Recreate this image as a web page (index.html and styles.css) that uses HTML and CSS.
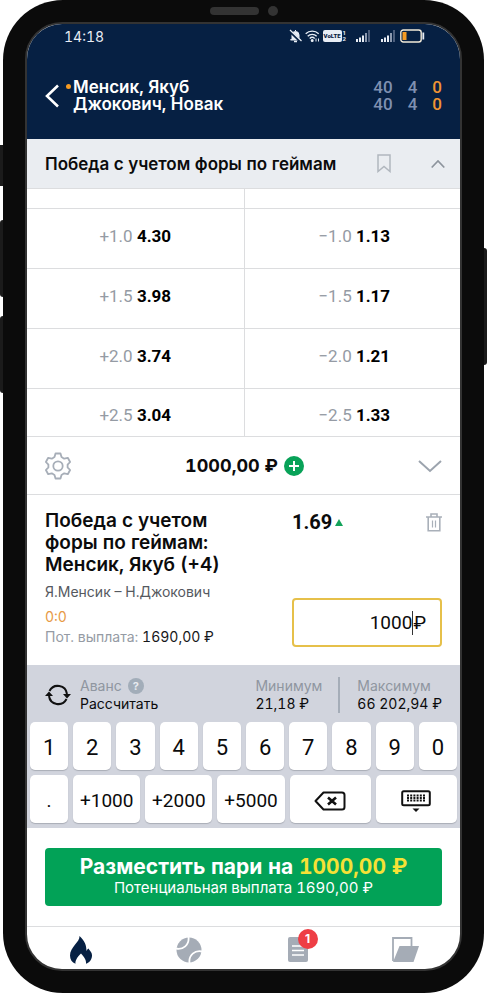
FILE: index.html
```html
<!DOCTYPE html>
<html lang="ru">
<head>
<meta charset="utf-8">
<meta name="viewport" content="width=device-width, initial-scale=1">
<title>Менсик, Якуб – Джокович, Новак</title>
<link rel="stylesheet" href="styles.css">
</head>
<body>
<div class="phone">
  <span class="side-key side-key-mute"></span>
  <span class="side-key side-key-up"></span>
  <span class="side-key side-key-down"></span>
  <span class="side-key side-key-power"></span>
  <div class="bezel-top"><span class="speaker"></span><span class="camera"></span></div>

  <div class="screen">
    <header class="top">
      <div class="status">
        <time class="clock">14:18</time>
        <div class="status-icons">
          <svg width="13" height="14" viewBox="0 0 13 14"><path d="M6.500 1v1M3 9.500V6a3.500 3.500 0 0 1 7 0v3.500l1.500 1.500h-10z" fill="#e8edf5" stroke="#e8edf5"/><path d="M5 12.500h3" stroke="#e8edf5" stroke-width="1.500"/><path d="M0 1.500 12 13" stroke="#062043" stroke-width="2.500"/><path d="M1 1 12.500 12" stroke="#e8edf5" stroke-width="1.200"/></svg>
          <svg class="wifi" width="15" height="14" viewBox="0 0 15 14" fill="none" stroke="#e8edf5" stroke-width="1.400"><path d="M.700 4.700a9.500 9.500 0 0 1 13 0M2.700 7.200a6.500 6.500 0 0 1 9 0M4.700 9.500a3.600 3.600 0 0 1 5 0"/><circle cx="7.200" cy="11.600" r=".8" fill="#e8edf5"/><path d="M11 9.500v3M13.500 9.500v3" stroke-width="1"/></svg>
          <span class="volte">VoLTE</span>
          <span class="sim"><span>1</span><span>2</span></span>
          <svg class="signal" width="14" height="12" viewBox="0 0 14 12"><path d="M0 9h2v3H0zM3 7.500h2V12H3zM6 5.500h2V12H6z" fill="#e8edf5"/><path d="M9 3h2v9H9z" fill="#8d9ab0"/><path d="M12 0h2v12h-2z" fill="#4c5e7c"/></svg>
          <svg class="signal" width="14" height="12" viewBox="0 0 14 12"><path d="M0 9h2v3H0zM3 7.500h2V12H3zM6 5.500h2V12H6z" fill="#e8edf5"/><path d="M9 3h2v9H9z" fill="#8d9ab0"/><path d="M12 0h2v12h-2z" fill="#4c5e7c"/></svg>
          <svg class="battery" width="25" height="14" viewBox="0 0 25 14"><rect x=".8" y="1" width="20.400" height="12" rx="2.500" fill="none" stroke="#f2ead9" stroke-width="1.400"/><rect x="2.500" y="3" width="4" height="8" fill="#f49a22"/><path d="M23.300 3.500v7" stroke="#e8edf5" stroke-width="1.800"/></svg>
        </div>
      </div>
      <div class="match">
        <button class="back" type="button" aria-label="Назад"><svg width="14" height="24" viewBox="0 0 14 24"><path d="M13 1.500 2 12l11 10.500" fill="none" stroke="#fff" stroke-width="2.600"/></svg></button>
        <span class="serve"></span>
        <h1 class="players">Менсик, Якуб<br>Джокович, Новак</h1>
        <div class="score">
          <span>40</span><span>4</span><span class="live">0</span>
          <span>40</span><span>4</span><span class="live">0</span>
        </div>
      </div>
    </header>

    <div class="market">
      <h2 class="market-name">Победа с учетом форы по геймам</h2>
      <button class="plain" type="button" aria-label="В закладки"><svg width="14" height="19" viewBox="0 0 14 19"><path d="M1 1h12v16.500L7 12.500l-6 5z" fill="none" stroke="#b1b7be" stroke-width="1.500"/></svg></button>
      <button class="plain collapse" type="button" aria-label="Свернуть"><svg width="14" height="10" viewBox="0 0 14 10"><path d="M.7 8.500 7 2l6.300 6.500" fill="none" stroke="#8d949d" stroke-width="1.700"/></svg></button>
    </div>

    <table class="odds">
      <tbody>
        <tr class="odds-cut"><td></td><td></td></tr>
        <tr><td>+1.0 <b>4.30</b></td><td>−1.0 <b>1.13</b></td></tr>
        <tr><td>+1.5 <b>3.98</b></td><td>−1.5 <b>1.17</b></td></tr>
        <tr><td>+2.0 <b>3.74</b></td><td>−2.0 <b>1.21</b></td></tr>
        <tr class="odds-last"><td>+2.5 <b>3.04</b></td><td>−2.5 <b>1.33</b></td></tr>
      </tbody>
    </table>

    <section class="balance">
      <button class="plain" type="button" aria-label="Настройки"><svg width="26" height="28" viewBox="0 0 26 28" fill="none" stroke="#a7aeb8" stroke-width="1.800" stroke-linejoin="round"><path d="M10.500 1.500h5l1 3.600 2.700 1.600 3.600-.9 2.300 4.200-2.500 2.600v2.800l2.500 2.600-2.300 4.200-3.600-.9-2.700 1.600-1 3.600h-5l-1-3.600-2.700-1.600-3.600.9L.9 18l2.500-2.600v-2.800L.9 10l2.300-4.200 3.600.9 2.700-1.600z"/><circle cx="13" cy="14" r="4.700"/></svg></button>
      <div class="sum"><strong>1000,00 ₽</strong>
        <button class="plain" type="button" aria-label="Пополнить"><svg width="20" height="20" viewBox="0 0 20 20"><circle cx="10" cy="10" r="10" fill="#08a258"/><path d="M10 5v10M5 10h10" stroke="#fff" stroke-width="2"/></svg></button>
      </div>
      <button class="plain" type="button" aria-label="Скрыть купон"><svg width="24" height="14" viewBox="0 0 24 14"><path d="M1 2l11 10L23 2" fill="none" stroke="#9ca4ae" stroke-width="2"/></svg></button>
    </section>

    <section class="bet">
      <div class="bet-info">
        <h3 class="bet-title">Победа с учетом<br>форы по геймам:<br>Менсик, Якуб (+4)</h3>
        <p class="bet-match">Я.Менсик – Н.Джокович</p>
        <p class="bet-score">0:0</p>
        <p class="bet-payout">Пот. выплата: <span>1690,00 ₽</span></p>
      </div>
      <div class="bet-side">
        <div class="bet-odd">
          <strong>1.69</strong>
          <svg class="up" width="8" height="7" viewBox="0 0 8 7"><path d="M4 0l4 7H0z" fill="#12a35a"/></svg>
          <button class="plain" type="button" aria-label="Удалить"><svg width="16" height="19" viewBox="0 0 16 19" fill="none" stroke="#a9b0b9" stroke-width="1.600"><path d="M0 4h16M5 3.500V1h6v2.500M2.200 4.500v13.200h11.600V4.500"/><path d="M6.500 7.500v7M9.500 7.500v7" stroke-width="1.200"/></svg></button>
        </div>
        <label class="stake"><input type="text" inputmode="numeric" value="1000" aria-label="Сумма пари"><span class="caret"></span><span>₽</span></label>
      </div>
    </section>

    <section class="keyboard">
      <div class="limits">
        <svg class="refresh" width="26" height="22" viewBox="0 0 26 22"><path d="M4.500 7A9.300 9.300 0 0 1 22 10M21.500 15A9.300 9.300 0 0 1 4 12" fill="none" stroke="#111" stroke-width="2"/><path d="M18 10h8l-4 4.500zM0 12h8L4 7.500z" fill="#111"/></svg>
        <div class="limit advance"><span class="hint">Аванс <i class="help">?</i></span><span>Рассчитать</span></div>
        <div class="limit"><span class="hint">Минимум</span><span>21,18 ₽</span></div>
        <div class="limit limit-max"><span class="hint">Максимум</span><span>66 202,94 ₽</span></div>
      </div>
      <div class="keys">
        <button type="button">1</button><button type="button">2</button><button type="button">3</button><button type="button">4</button><button type="button">5</button><button type="button">6</button><button type="button">7</button><button type="button">8</button><button type="button">9</button><button type="button">0</button>
      </div>
      <div class="keys keys-wide">
        <button type="button">.</button><button type="button">+1000</button><button type="button">+2000</button><button type="button">+5000</button>
        <button type="button" aria-label="Стереть"><svg width="32" height="20" viewBox="0 0 32 20" fill="none" stroke="#111" stroke-width="2" stroke-linejoin="round"><path d="M9.500 1.500H28a2.500 2.500 0 0 1 2.500 2.500v12a2.500 2.500 0 0 1-2.500 2.500H9.500L1.500 10z"/><path d="m14 6.500 8 7m0-7-8 7" stroke-width="2.600"/></svg></button>
        <button type="button" aria-label="Скрыть клавиатуру"><svg width="30" height="22" viewBox="0 0 30 22"><rect x="1.200" y="1.200" width="27.600" height="14" rx="1.500" fill="none" stroke="#111" stroke-width="2"/><path d="M6 5.500h18M6 8h18M6 10.500h18" stroke="#111" stroke-width="1.800" stroke-dasharray="2 1.200"/><path d="M11.500 18.500h7l-3.500 3.500z" fill="#111"/></svg></button>
      </div>
    </section>

    <div class="place">
      <button class="place-btn" type="button">
        <span class="place-main">Разместить пари на <em>1000,00 ₽</em></span>
        <span class="place-sub">Потенциальная выплата 1690,00 ₽</span>
      </button>
    </div>

    <nav class="tabs">
      <a href="#top" aria-label="Популярное"><svg width="22" height="28" viewBox="0 0 22 28"><path d="M9.500 0c.5 6-9.500 11-9.500 19.500 0 4 2 7 5.500 8.300-.5-3.500 2-6.800 5.500-10.300 3 3.500 5.500 6.500 5 10.300 3.500-1.300 6-4.300 6-8.300 0-3.500-2-4.500-3.500-7-1 .8-1.800 1.500-2 2.700C16.500 9 14.500 4.500 9.500 0z" fill="#062043"/></svg></a>
      <a href="#sport" aria-label="Спорт"><svg width="26" height="26" viewBox="0 0 26 26"><circle cx="13" cy="13" r="12.500" fill="#a5acb6"/><path d="M0 11.500C7 13 13.500 8 12.500 0M13.500 26C12.500 18 19 13 26 14.500" fill="none" stroke="#fff" stroke-width="1.800"/></svg></a>
      <a class="coupon" href="#coupon" aria-label="Купон"><svg width="20" height="25" viewBox="0 0 20 25"><rect width="20" height="25" rx="2" fill="#a5acb6"/><path d="M4 9h12M4 13.500h12M4 18h12" stroke="#fff" stroke-width="1.400"/></svg><span class="badge">1</span></a>
      <a href="#history" aria-label="История"><svg width="27" height="25" viewBox="0 0 27 25"><path d="M1 24V1h18.500v8" fill="none" stroke="#a5acb6" stroke-width="1.800"/><path d="M7.500 9H27l-5.500 16H1z" fill="#a5acb6"/></svg></a>
    </nav>
  </div>
</div>
</body>
</html>
```
FILE: styles.css
```css
:root {
  --navy: #062043;
  --line: #dcdddf;
  --muted: #959ba4;
  --green: #02a257;
  --text: Inter, "Noto Sans", sans-serif;
  --digits: Roboto, "Noto Sans", sans-serif;
}

* { box-sizing: border-box; }

body {
  margin: 0;
  padding: 0 3px;
  background: #fff;
  color: #0b0b0c;
  font-family: var(--text);
  font-size: 14px;
  font-variant-numeric: tabular-nums;
}

h1, h2, h3, p { margin: 0; }

button, input { font: inherit; color: inherit; font-variant-numeric: inherit; }

svg { display: block; flex: none; }

.plain, .back {
  padding: 0;
  border: 0;
  background: none;
}

.phone {
  position: relative;
  display: flex;
  flex-direction: column;
  min-height: 100vh;
  padding: 0 22px 22px;
  border-radius: 60px;
  background: #0b0b0b;
}

.side-key {
  position: absolute;
  left: -3px;
  width: 3px;
  background: #1b1b1b;
}

.side-key-mute { top: 145px; height: 41px; }
.side-key-up { top: 220px; height: 77px; border-radius: 3px 0 0 3px; }
.side-key-down { top: 316px; height: 77px; border-radius: 3px 0 0 3px; }
.side-key-power { top: 248px; left: auto; right: -3px; height: 117px; border-radius: 0 3px 3px 0; }

.bezel-top {
  display: flex;
  justify-content: center;
  align-items: center;
  gap: 9px;
  height: 22px;
}

.speaker { width: 49px; height: 8px; border-radius: 4px; background: #333; }
.camera { width: 10px; height: 10px; border-radius: 50%; background: #333; }

.screen {
  flex: 1;
  display: flex;
  flex-direction: column;
  overflow: hidden;
  border: 2px solid #333;
  border-radius: 37px;
  background: #fff;
}

.top { background: var(--navy); color: #fff; }

.status {
  display: flex;
  justify-content: space-between;
  align-items: center;
  height: 24px;
  padding: 0 35px 0 37px;
}

.clock { color: #e8edf5; font-size: 14px; }

.status-icons { display: flex; align-items: center; color: #e8edf5; }

.wifi { margin-left: 3px; }

.volte {
  margin-left: 3px;
  padding: 0 1px;
  border-radius: 2px;
  background: #e8edf5;
  color: var(--navy);
  font: 900 6px/12px var(--digits);
}

.sim {
  display: grid;
  margin: 0 10px 0 1px;
  font: 700 6px/6px var(--digits);
}

.signal { margin-right: 11px; }
.signal + .battery { margin-left: -6px; }

.match {
  display: flex;
  align-items: center;
  height: 91px;
  padding: 4px 18px 0;
}

.serve {
  align-self: flex-start;
  width: 5px;
  height: 5px;
  margin: 32px 2px 0 7px;
  border-radius: 50%;
  background: #f49a22;
}

.players { flex: 1; font-size: 17px; font-weight: 600; line-height: 17px; }

.score {
  display: grid;
  grid-template-columns: auto auto auto;
  column-gap: 15px;
  color: #7f90b1;
  font: 500 17px/17px var(--digits);
}

.score .live { color: #ef9433; }

.market {
  display: flex;
  align-items: center;
  height: 50px;
  padding: 0 15px 0 18px;
  border-bottom: 1px solid var(--line);
  background: #eaedf1;
}

.market-name { flex: 1; font-size: 17px; font-weight: 600; white-space: nowrap; }
.collapse { margin-left: 40px; }

.odds {
  width: 100%;
  table-layout: fixed;
  border-spacing: 0;
  color: var(--muted);
  font: 400 17px/20px var(--digits);
  text-align: center;
}

.odds td {
  height: 60px;
  padding: 0 0 6px;
  border-bottom: 1px solid var(--line);
}

.odds td + td { padding-left: 4px; border-left: 1px solid var(--line); }
.odds b { color: #000; }
.odds .odds-cut td { height: 20px; padding: 0; }
.odds .odds-last td { height: 48px; padding-top: 4px; padding-bottom: 0; }

.balance {
  display: flex;
  justify-content: space-between;
  align-items: center;
  height: 58px;
  padding: 0 18px;
  border-bottom: 1px solid var(--line);
}

.sum { display: flex; align-items: center; gap: 6px; font-size: 18px; }

.bet {
  display: flex;
  justify-content: space-between;
  padding: 15px 18px 18px;
}

.bet-title { font-size: 19px; font-weight: 600; line-height: 22px; white-space: nowrap; }
.bet-match { margin-top: 5px; color: #55595f; line-height: 22px; }
.bet-score { margin-top: 4px; color: #e79a45; line-height: 20px; }
.bet-payout { color: var(--muted); line-height: 20px; }
.bet-payout span { color: #17181a; }

.bet-side {
  display: flex;
  flex-direction: column;
  justify-content: space-between;
  width: 150px;
}

.bet-odd { display: flex; align-items: center; height: 24px; }
.bet-odd strong { font: 700 20px/24px var(--digits); }
.up { margin: 0 auto 0 3px; }

.stake {
  display: flex;
  align-items: center;
  height: 49px;
  padding: 0 14px;
  border: 2px solid #e6c04a;
  border-radius: 4px;
  font: 400 19px/24px var(--digits);
}

.stake input {
  flex: 1;
  min-width: 0;
  padding: 0;
  border: 0;
  outline: 0;
  background: none;
  text-align: right;
}

.caret { width: 1px; height: 24px; background: #333; }

.keyboard { padding: 10px 3px 5px; background: #d1d4dd; }

.limits {
  display: flex;
  align-items: center;
  height: 40px;
  margin-bottom: 7px;
  padding: 0 0 0 15px;
}

.limit {
  display: grid;
  line-height: 18px;
  white-space: nowrap;
}

.advance { flex: 1; margin-left: 9px; }
.limit-max { margin-left: 16px; padding: 0 15px 0 17px; border-left: 2px solid #a5adb8; }
.hint { display: flex; align-items: center; gap: 6px; color: #8f96a0; }

.help {
  width: 16px;
  border-radius: 50%;
  background: #a2adb9;
  color: #e7eaef;
  font: 700 11px/16px var(--text);
  text-align: center;
}

.keys {
  display: grid;
  grid-template-columns: repeat(10, 1fr);
  gap: 5px;
}

.keys button {
  display: flex;
  justify-content: center;
  align-items: center;
  height: 48px;
  padding: 4px 0 0;
  border: 0;
  border-radius: 5px;
  background: #fff;
  box-shadow: 0 1px 1px #a9adb6;
  font: 400 22px/28px var(--digits);
}

.keys-wide {
  grid-template-columns: 38fr 67fr 67fr 67fr 81fr 81fr;
  margin-top: 5px;
}

.keys-wide button { font-size: 19px; }

.place { padding: 20px 18px; }

.place-btn {
  display: grid;
  align-content: center;
  width: 100%;
  height: 58px;
  padding: 0;
  border: 0;
  border-radius: 4px;
  background: var(--green);
  color: #fff;
  white-space: nowrap;
}

.place-main { font-size: 21px; font-weight: 700; line-height: 22px; }
.place-main em { color: #f5e136; font-style: normal; }
.place-sub { font-size: 15px; line-height: 20px; }

.tabs {
  flex: 1;
  display: grid;
  grid-template-columns: repeat(4, 1fr);
  align-items: center;
  justify-items: center;
  min-height: 43px;
  padding-top: 3px;
  border-top: 1px solid var(--line);
}

.coupon { position: relative; }

.badge {
  position: absolute;
  top: -8px;
  left: 10px;
  width: 20px;
  border-radius: 50%;
  background: #ee3e45;
  color: #fff;
  font: 700 12px/20px var(--text);
  text-align: center;
}
```
